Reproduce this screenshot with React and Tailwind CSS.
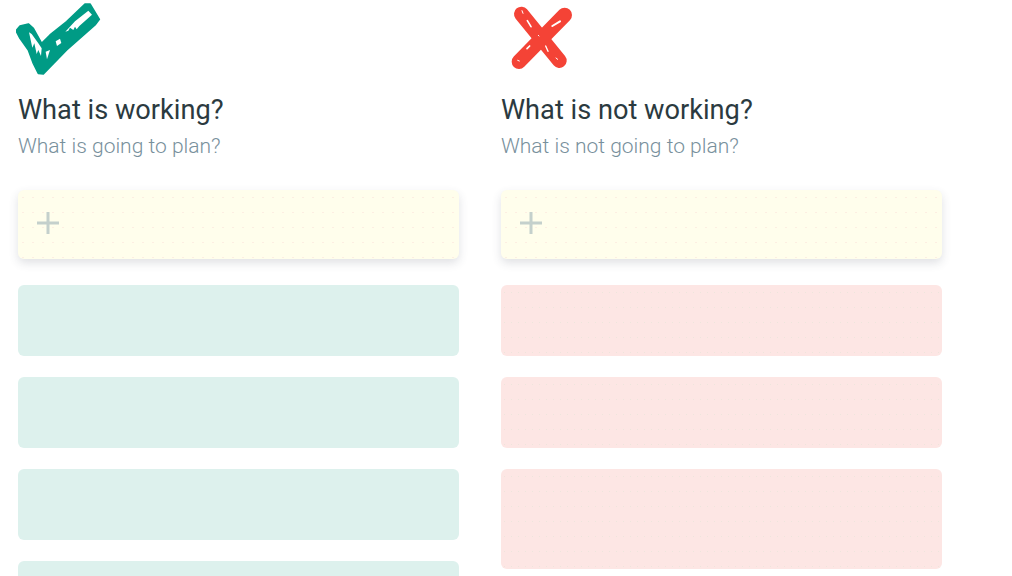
const greenCards = [71, 71, 71, 71];
const redCards = [71, 71, 100];

const CheckIcon = () => (
  <svg width="90" height="76" viewBox="48 0 270 228" className="ml-[-2px] block">
    <path d="M48 92 L60 78 L85 72 L100 85 L125 130 L150 105 L200 65 L255 12 L270 12 L298 58 L285 75 L200 150 L130 222 L115 220 L100 190 L85 150 L60 115 Z" fill="#009b85" stroke="#009b85" strokeWidth="5" strokeLinejoin="round" />
    <g fill="#fff">
      <path d="M265 32 L276 44 L238 78 L230 88 L225 80 L220 90 L210 83 L205 92 L196 95 L225 64 Z" />
      <path d="M167 124 L180 116 L184 129 L171 138 Z" />
      <path d="M137 155 L150 150 L141 178 Z" />
      <path d="M87 97 L95 102 L115 130 L125 145 L123 168 L115 150 L110 162 L103 130 L97 143 Z" />
    </g>
  </svg>
);

const CrossIcon = () => (
  <svg width="90" height="76" viewBox="33 0 270 228" className="block">
    <g stroke="#f44336" strokeWidth="44" strokeLinecap="round" strokeLinejoin="round" fill="none">
      <path d="M94 42 L208 182" />
      <path d="M224 45 L87 185" />
    </g>
    <g transform="translate(45 6)" stroke="#fff" strokeLinecap="round" fill="none">
      <path d="M67 56 L78 74" strokeWidth="5" />
      <path d="M51 26 L54 34" strokeWidth="3" />
      <path d="M142 72 L165 58" strokeWidth="6" />
      <path d="M122 132 L129 148" strokeWidth="4" />
      <path d="M66 140 L74 132" strokeWidth="5" />
      <path d="M38 175 L43 177" strokeWidth="3" />
      <path d="M153 168 L158 172" strokeWidth="3" />
      <path d="M100 100 L102 102" strokeWidth="3" />
    </g>
  </svg>
);

const Column = ({ icon, title, subtitle, cardClass, cards }) => (
  <div className="w-[441px] shrink-0">
    <div className="h-[76px]">{icon}</div>
    <h2 className="mt-[18px] text-[27.2px] leading-[32px] font-normal text-[#2b3a40]">{title}</h2>
    <p className="mt-[6px] text-[21px] leading-[28px] font-light text-[#78909c]">{subtitle}</p>
    <div className="mt-[30px] h-[69px] rounded-md bg-[#fffeec] bg-[radial-gradient(circle,#fdeee2_0.6px,transparent_1px)] bg-[length:10px_15px] shadow-[0_4px_10px_rgba(60,70,90,0.16)] flex items-center pl-[19px] pb-[3px]">
      <svg width="22" height="22" viewBox="0 0 22 22">
        <path d="M11 0 V22 M0 11 H22" stroke="#c4d0cc" strokeWidth="3" />
      </svg>
    </div>
    <div className="mt-[26px] flex flex-col gap-[21px]">
      {cards.map((h, i) => (
        <div key={i} className={`rounded-md ${cardClass}`} style={{ height: h }} />
      ))}
    </div>
  </div>
);

export default function App() {
  return (
    <div className="h-[576px] overflow-hidden bg-white pl-[18px] font-['Roboto',sans-serif]">
      <div className="flex gap-[42px]">
        <Column
          icon={<CheckIcon />}
          title="What is working?"
          subtitle="What is going to plan?"
          cardClass="bg-[#ddf1ed]"
          cards={greenCards}
        />
        <Column
          icon={<CrossIcon />}
          title="What is not working?"
          subtitle="What is not going to plan?"
          cardClass="bg-[#fde6e4] bg-[radial-gradient(circle,#eee5dc_0.7px,transparent_1px)] bg-[length:7px_15px]"
          cards={redCards}
        />
      </div>
    </div>
  );
}
